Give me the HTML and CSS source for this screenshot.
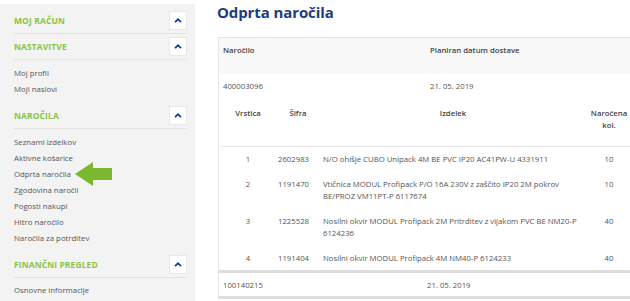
FILE: index.html
```html
<!DOCTYPE html>
<html lang="sl">
<head>
	<meta charset="UTF-8">
	<title>Odprta naročila</title>
<link rel="stylesheet" href="styles.css">
</head>
<body>
	<div class='page'>
		<div class='sidebar'>
			<div class='side-hd'>
				<div class='side-title'>MOJ RAČUN</div>
				<div class='side-btn'><svg width='8' height='5' viewBox='0 0 8 5'><path d='M1 4.2L4 1.3L7 4.2' fill='none' stroke='#1d3a86' stroke-width='1.7'/></svg></div>
			</div>
			<div class='side-hd'>
				<div class='side-title'>NASTAVITVE</div>
				<div class='side-btn'><svg width='8' height='5' viewBox='0 0 8 5'><path d='M1 4.2L4 1.3L7 4.2' fill='none' stroke='#1d3a86' stroke-width='1.7'/></svg></div>
			</div>
			<ul class='side-list'>
				<li>Moj profil</li>
				<li>Moji naslovi</li>
			</ul>
			<div class='side-hd'>
				<div class='side-title'>NAROČILA</div>
				<div class='side-btn'><svg width='8' height='5' viewBox='0 0 8 5'><path d='M1 4.2L4 1.3L7 4.2' fill='none' stroke='#1d3a86' stroke-width='1.7'/></svg></div>
			</div>
			<ul class='side-list'>
				<li>Seznami izdelkov</li>
				<li>Aktivne košarice</li>
				<li>Odprta naročila</li>
				<li>Zgodovina naročil</li>
				<li>Pogosti nakupi</li>
				<li>Hitro naročilo</li>
				<li>Naročila za potrditev</li>
			</ul>
			<div class='side-hd'>
				<div class='side-title'>FINANČNI PREGLED</div>
				<div class='side-btn'><svg width='8' height='5' viewBox='0 0 8 5'><path d='M1 4.2L4 1.3L7 4.2' fill='none' stroke='#1d3a86' stroke-width='1.7'/></svg></div>
			</div>
			<ul class='side-list'>
				<li>Osnovne informacije</li>
			</ul>
			<!-- puščica na aktivni povezavi -->
			<svg class='pointer' width='40' height='28' viewBox='0 0 40 28'>
				<path d='M0 13L18 1V7H37V19H18V25Z' fill='#7cb82f'/>
			</svg>
		</div>

		<div class='main'>
			<h1 class='main-title'>Odprta naročila</h1>
			<div class='orders'>
				<div class='orders-hd'>
					<div class='col-no'>Naročilo</div>
					<div class='col-date'>Planiran datum dostave</div>
				</div>
				<div class='order'>
					<div class='order-row'>
						<div class='col-no'>400003096</div>
						<div class='col-date'>21. 05. 2019</div>
					</div>
					<table class='lines'>
						<thead>
							<tr>
								<th class='c-line'>Vrstica</th>
								<th class='c-code'>Šifra</th>
								<th class='c-prod'>Izdelek</th>
								<th class='c-qty'>Naročena kol.</th>
							</tr>
						</thead>
						<tbody>
							<tr>
								<td class='c-line'>1</td>
								<td class='c-code'>2602983</td>
								<td class='c-prod'>N/O ohišje CUBO Unipack 4M BE PVC IP20 AC41PW-U 4331911</td>
								<td class='c-qty'>10</td>
							</tr>
							<tr>
								<td class='c-line'>2</td>
								<td class='c-code'>1191470</td>
								<td class='c-prod'>Vtičnica MODUL Profipack P/O 16A 230V z zaščito IP20 2M pokrov BE/PROZ VM11PT-P 6117674</td>
								<td class='c-qty'>10</td>
							</tr>
							<tr>
								<td class='c-line'>3</td>
								<td class='c-code'>1225528</td>
								<td class='c-prod'>Nosilni okvir MODUL Profipack 2M Pritrditev z vijakom PVC BE NM20&#8209;P 6124236</td>
								<td class='c-qty'>40</td>
							</tr>
							<tr>
								<td class='c-line'>4</td>
								<td class='c-code'>1191404</td>
								<td class='c-prod'>Nosilni okvir MODUL Profipack 4M NM40-P 6124233</td>
								<td class='c-qty'>40</td>
							</tr>
						</tbody>
					</table>
				</div>
				<div class='order'>
					<div class='order-row'>
						<div class='col-no'>100140215</div>
						<div class='col-date date-last'>21. 05. 2019</div>
					</div>
				</div>
			</div>
		</div>
	</div>
</body>
</html>
```

FILE: styles.css
```css
html,body{
	margin:0;
	padding:0;
	background:#fff;
	overflow:hidden;
}
body{
	font-family:"Open Sans","Noto Sans",sans-serif;
	color:#555;
	--green:#8cc43f;
	--navy:#1d3a86;
	--line:#e6e6e6;
}
.page{
	display:flex;
	width:630px;
	height:301px;
	overflow:hidden;
}

/* levi meni */
.sidebar{
	position:relative;
	flex:0 0 195px;
	box-sizing:border-box;
	margin-top:4px;
	padding:4px 8px 0 14px;
	background:#f3f3f3;
}
.side-hd{
	display:flex;
	align-items:center;
	justify-content:space-between;
	padding:3px 0;
	border-bottom:1px solid #e2e2e2;
}
.side-title{
	font-size:8.5px;
	font-weight:700;
	color:var(--green);
	letter-spacing:0.1px;
}
.side-btn{
	display:flex;
	align-items:center;
	justify-content:center;
	width:18px;
	height:19px;
	box-sizing:border-box;
	background:#fff;
	border:1px solid #e8e8e8;
}
.side-list{
	list-style:none;
	margin:0;
	padding:5px 0 6px;
}
.side-list li{
	font-size:7.8px;
	line-height:16px;
	color:#555;
}
.side-list:last-of-type{
	padding-top:4px;
}
.pointer{
	position:absolute;
	left:75px;
	top:157px;
}

/* glavni del */
.main{
	flex:1 0 auto;
	padding-left:23px;
}
.main-title{
	margin:2px 0 0 -1px;
	font-size:15px;
	line-height:20px;
	font-weight:700;
	letter-spacing:-0.1px;
	color:var(--navy);
}
.orders{
	margin-top:15px;
	width:430px;
	border-top:1px solid var(--line);
	border-left:1px solid var(--line);
	font-size:7.75px;
	line-height:12px;
}
.orders-hd{
	display:flex;
	height:36px;
	box-sizing:border-box;
	padding:6px 0 0 4px;
	background:#f8f8f8;
	font-weight:600;
	color:#444;
}
.col-no{
	width:207px;
}
.order{
	border-bottom:3px solid #ddd;
}
.order-row{
	display:flex;
	padding:6px 0 5px 4px;
}
.date-last{
	margin-left:-3px;
}
.lines{
	margin-left:2px;
	border-collapse:collapse;
	table-layout:fixed;
	width:412px;
}
.lines th{
	padding:10px 0 15px;
	font-weight:600;
	color:#444;
	text-align:center;
	vertical-align:top;
	border-bottom:1px solid var(--line);
}
.lines td{
	padding:6px 0;
	line-height:12.5px;
	vertical-align:top;
	text-align:center;
}
.c-line{ width:54px; }
.c-code{ width:46px; }
.lines td.c-code{
	text-align:left;
	padding-left:3px;
}
.c-prod{ width:264px; }
.lines td.c-prod{
	text-align:left;
	padding-left:2px;
	padding-right:3px;
}
.c-qty{ width:48px; }
```
